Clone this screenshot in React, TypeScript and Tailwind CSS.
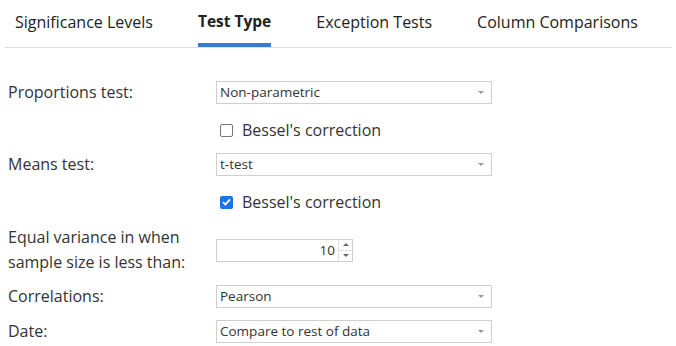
import React from 'react';

const labelFont = { fontFamily: '"Open Sans", Lato, sans-serif' };

function Select({ value }: { value: string }) {
  return (
    <div className="w-[276px] h-[23px] border border-[#cfcfcf] bg-white flex items-center justify-between pl-[3px] pr-[7px] text-[13.5px] text-[#333]" style={labelFont}>
      <span>{value}</span>
      <svg width="6" height="3" viewBox="0 0 6 3"><path d="M0 0 L6 0 L3 3 Z" fill="#999" /></svg>
    </div>
  );
}

function Check({ checked }: { checked?: boolean }) {
  return (
    <div className="flex items-center gap-[9px] pl-[4px] h-[20px]">
      {checked ? (
        <span className="w-[13px] h-[13px] rounded-[2px] bg-[#1a73e8] flex items-center justify-center">
          <svg width="9" height="8" viewBox="0 0 9 8"><path d="M1 4.2 L3.4 6.5 L8 1.3" stroke="white" strokeWidth="1.8" fill="none" /></svg>
        </span>
      ) : (
        <span className="w-[13px] h-[13px] rounded-[2px] border border-[#767676] bg-white" />
      )}
      <span className="text-[16px] leading-[20px] text-[#333]" style={labelFont}>Bessel's correction</span>
    </div>
  );
}

function Row({ label, children, className = '' }: { label: React.ReactNode; children: React.ReactNode; className?: string }) {
  return (
    <div className={`flex items-center ${className}`}>
      <div className="w-[208px] text-[16px] leading-[25px] text-[#333]" style={labelFont}>{label}</div>
      {children}
    </div>
  );
}

export default function App() {
  const tabs = ['Significance Levels', 'Test Type', 'Exception Tests', 'Column Comparisons'];
  return (
    <div className="w-[676px] h-[346px] bg-white overflow-hidden">
      <div className="ml-[5px] mr-[4px] border-b border-[#dcdcdc] flex gap-[45px] pl-[10px] h-[48px]">
        {tabs.map(t => (
          <div key={t} className={`flex flex-col justify-between ${t === 'Test Type' ? 'font-bold text-[15.5px] text-[#222]' : 'text-[16px] text-[#222]'}`}>
            <span className="pt-[10px]" style={labelFont}>{t}</span>
            <span className={`h-[4px] ${t === 'Test Type' ? 'bg-[#3a7bd0]' : ''}`} />
          </div>
        ))}
      </div>

      <div className="pl-[8px]">
        <Row label="Proportions test:" className="mt-[32px]">
          <Select value="Non-parametric" />
        </Row>
        <div className="pl-[208px] mt-[15px]"><Check /></div>
        <Row label="Means test:" className="mt-[12px]">
          <Select value="t-test" />
        </Row>
        <div className="pl-[208px] mt-[15px]"><Check checked /></div>
        <Row label={<>Equal variance in when<br />sample size is less than:</>} className="mt-[13px]">
          <div className="w-[137px] h-[23px] border border-[#cfcfcf] bg-white flex items-center">
            <span className="flex-1 text-right pr-[3px] text-[13.5px] text-[#333]" style={labelFont}>10</span>
            <div className="w-[14px] h-full flex flex-col border-l border-[#e0e0e0]">
              <div className="flex-1 flex items-center justify-center border-b border-[#e0e0e0]">
                <svg width="6" height="3" viewBox="0 0 6 3"><path d="M0 3 L6 3 L3 0 Z" fill="#666" /></svg>
              </div>
              <div className="flex-1 flex items-center justify-center">
                <svg width="6" height="3" viewBox="0 0 6 3"><path d="M0 0 L6 0 L3 3 Z" fill="#666" /></svg>
              </div>
            </div>
          </div>
        </Row>
        <Row label="Correlations:" className="mt-[9px]">
          <Select value="Pearson" />
        </Row>
        <Row label="Date:" className="mt-[10px]">
          <Select value="Compare to rest of data" />
        </Row>
      </div>
    </div>
  );
}
